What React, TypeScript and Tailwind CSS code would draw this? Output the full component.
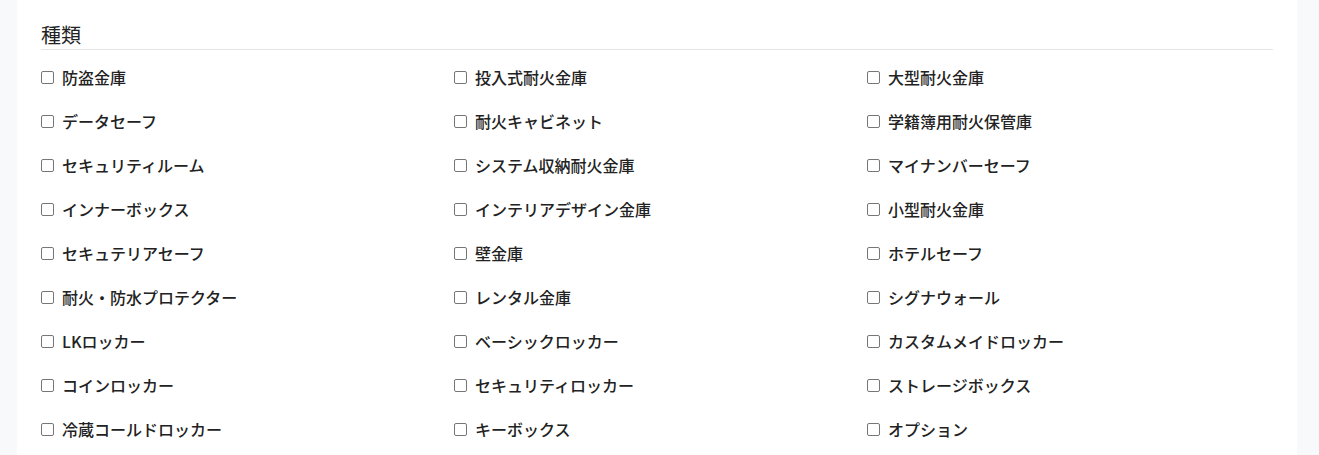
import React from 'react';

const items: string[] = [
  '防盗金庫', '投入式耐火金庫', '大型耐火金庫',
  'データセーフ', '耐火キャビネット', '学籍簿用耐火保管庫',
  'セキュリティルーム', 'システム収納耐火金庫', 'マイナンバーセーフ',
  'インナーボックス', 'インテリアデザイン金庫', '小型耐火金庫',
  'セキュテリアセーフ', '壁金庫', 'ホテルセーフ',
  '耐火・防水プロテクター', 'レンタル金庫', 'シグナウォール',
  'LKロッカー', 'ベーシックロッカー', 'カスタムメイドロッカー',
  'コインロッカー', 'セキュリティロッカー', 'ストレージボックス',
  '冷蔵コールドロッカー', 'キーボックス', 'オプション',
];

export default function App() {
  return (
    <div
      className="min-h-screen bg-[#f8f9fb] px-[17px] pr-[22px]"
      style={{ fontFamily: '"Noto Sans CJK JP", "Noto Sans", sans-serif' }}
    >
      <div className="bg-white px-6 pt-[21px] pb-4 min-h-[455px]">
        <h2 className="text-[20px] leading-[28px] font-normal text-[#222] border-b border-[#e5e5e5] pb-0">
          種類
        </h2>
        <ul className="mt-[5px] grid grid-cols-[413px_413px_1fr]">
          {items.map((label) => (
            <li key={label} className="h-[44px] flex items-center">
              <label className="flex items-center gap-[8px] cursor-pointer">
                <input
                  type="checkbox"
                  className="w-[13px] h-[13px] appearance-none border border-[#767676] rounded-[2px] bg-white m-0"
                />
                <span className="text-[16px] font-medium text-[#222] leading-none">{label}</span>
              </label>
            </li>
          ))}
        </ul>
      </div>
    </div>
  );
}
